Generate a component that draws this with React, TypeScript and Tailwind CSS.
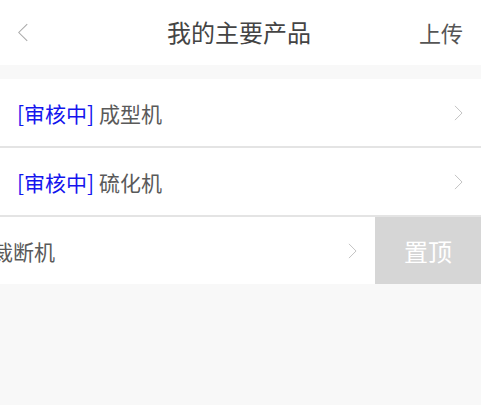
const FONT = { fontFamily: '"Noto Sans CJK SC", "Noto Sans", sans-serif' };

function Chevron({ dir = "right", className = "" }: { dir?: "left" | "right"; className?: string }) {
  return (
    <svg viewBox="0 0 10 18" className={className} fill="none" stroke="currentColor" strokeWidth="1">
      {dir === "right" ? <path d="M1 1l8 8-8 8" /> : <path d="M9 1L1 9l8 8" />}
    </svg>
  );
}

interface Product {
  name: string;
  status?: string;
}

const products: Product[] = [
  { name: "成型机", status: "[审核中]" },
  { name: "硫化机", status: "[审核中]" },
];

function Row({ item }: { item: Product }) {
  return (
    <div className="flex h-[69px] items-center justify-between border-b-2 border-[#e4e4e4] bg-white pl-[17px] pr-[18px]">
      <p className="pt-[1px] text-[21px] leading-none text-[#5a5a5a]">
        {item.status && <span className="text-[#1414ee]">{item.status} </span>}
        {item.name}
      </p>
      <Chevron className="h-[16px] w-[9px] text-[#bbb]" />
    </div>
  );
}

export default function App() {
  return (
    <div className="h-[405px] w-full overflow-hidden bg-[#f8f8f8]" style={FONT}>
      <header className="flex h-[65px] items-center justify-between bg-white pl-[17px] pr-[18px]">
        <Chevron dir="left" className="h-[19px] w-[12px] text-[#aaa]" />
        <h1 className="-mt-[1px] ml-[30px] text-[24px] leading-none text-[#444]">我的主要产品</h1>
        <span className="-mt-[1px] text-[22px] leading-none text-[#555]">上传</span>
      </header>
      <div className="mt-[14px]">
        {products.map((p) => (
          <Row key={p.name} item={p} />
        ))}
        <div className="relative flex h-[67px] overflow-hidden">
          <div className="flex w-[375px] shrink-0 items-center justify-between bg-white pr-[18px]">
            <p className="-ml-[8px] pt-[1px] text-[21px] leading-none text-[#5a5a5a]">裁断机</p>
            <Chevron className="h-[16px] w-[9px] text-[#bbb]" />
          </div>
          <button className="flex flex-1 items-center justify-center bg-[#d6d6d6] text-[24px] text-white">
            置顶
          </button>
        </div>
      </div>
    </div>
  );
}
